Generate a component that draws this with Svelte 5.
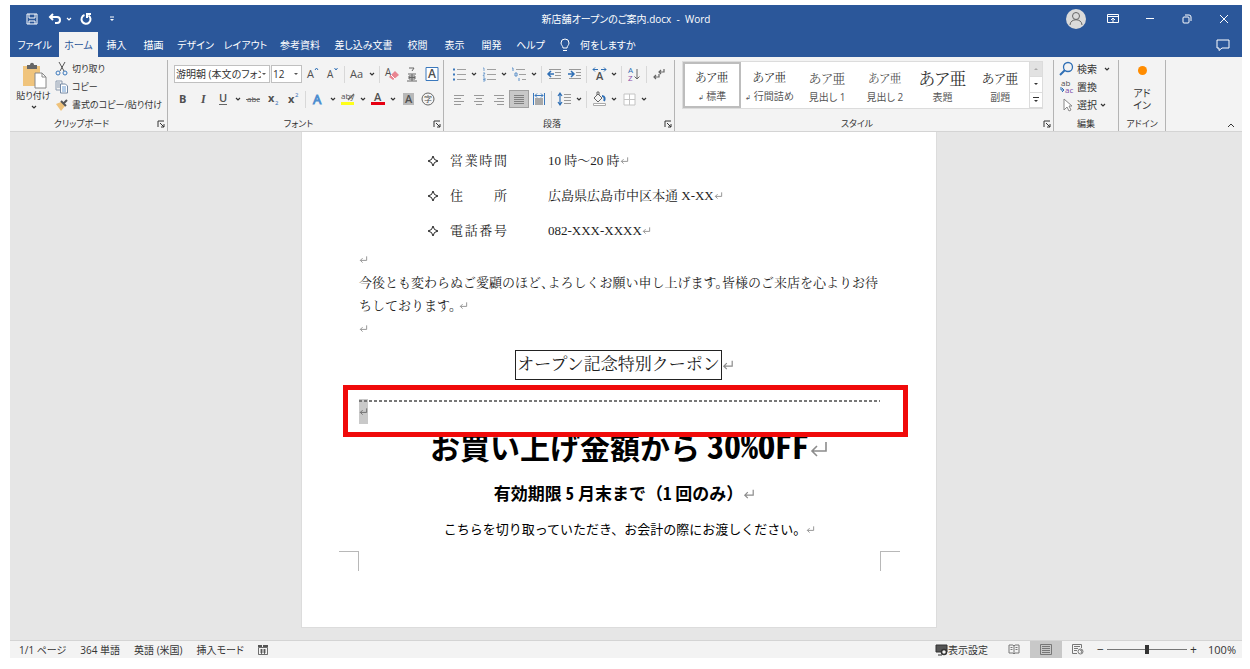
<script lang="ts">
	const tabs = [
		'ファイル', 'ホーム', '挿入', '描画', 'デザイン', 'レイアウト',
		'参考資料', '差し込み文書', '校閲', '表示', '開発', 'ヘルプ'
	];

	let activeTab = $state('ホーム');
	let activeStyle = $state('標準');
	let zoom = $state(100);

	const styles = [
		{ name: '標準', kind: 'body', mark: true },
		{ name: '行間詰め', kind: 'body', mark: true },
		{ name: '見出し 1', kind: 'heading', mark: false },
		{ name: '見出し 2', kind: 'heading small', mark: false },
		{ name: '表題', kind: 'title', mark: false },
		{ name: '副題', kind: 'subtitle', mark: false }
	];

	const details = [
		{ label: '営業時間', value: '10 時～20 時' },
		{ label: '住所', value: '広島県広島市中区本通 X-XX' },
		{ label: '電話番号', value: '082-XXX-XXXX' }
	];

	// '|' is a divider, 'v' a small drop-down arrow
	const fontTop = ['grow', 'shrink', '|', 'case', 'v', '|', 'clear', 'ruby', 'enclose'];
	const fontBottom = ['bold', 'italic', 'underline', 'v', 'strike', 'sub', 'sup', '|', 'effects', 'v', 'highlight', 'v', 'color', 'v', 'shade', 'circle'];
	const paraTop = ['bullets', 'v', 'numbers', 'v', 'levels', 'v', '|', 'outdent', 'indent', '|', 'asian', 'v', '|', 'sort', '|', 'marks'];
	const paraBottom = ['left', 'center', 'right', 'justify', 'distribute', '|', 'spacing', 'v', '|', 'fill', 'v', 'borders', 'v'];

	// all drawn on a 16 x 16 grid
	const icons: Record<string, string> = {
		grow: '<text x="3" y="12" font-size="11">A</text><path d="M11 4l1.500-2L14 4" stroke="#2f6fb5"/>',
		shrink: '<text x="3" y="12" font-size="10">A</text><path d="M10.500 2l1.500 2 1.500-2" stroke="#2f6fb5"/>',
		case: '<text x="1" y="12" font-size="11">Aa</text>',
		clear: '<text x="1" y="10" font-size="10">A</text><path d="M5 11l6-6 4 4-6 5z" fill="#e98591" stroke="none"/><path d="M7 9l4 4" stroke="#fff"/>',
		ruby: '<path d="M5 2h5l-2 3M4 8h8M5 10h6v3H5zM8 8v7M3 15h10M5 11.500h6"/>',
		enclose: '<path d="M2 1.500h12v13H2z" stroke="#3b79bd" fill="#fff"/><text x="4" y="12" font-size="12" font-weight="600">A</text>',
		bold: '<text x="4" y="12" font-size="11" font-weight="700">B</text>',
		italic: '<text x="6" y="12" font-size="12" font-style="italic" font-weight="600" font-family="Liberation Serif">I</text>',
		underline: '<text x="4" y="11" font-size="11" font-weight="600">U</text><path d="M4 13.500h8"/>',
		strike: '<text x="2" y="11" font-size="8">abc</text><path d="M1 8.500h14"/>',
		sub: '<text x="3" y="11" font-size="11" font-weight="700">x</text><text x="10" y="14" font-size="6" style="fill:#2f6fb5">2</text>',
		sup: '<text x="3" y="12" font-size="11" font-weight="700">x</text><text x="10" y="6" font-size="6" style="fill:#2f6fb5">2</text>',
		effects: '<text x="3" y="13" font-size="13" style="fill:#fff;stroke:#4f8fd0;stroke-width:1">A</text>',
		highlight: '<text x="1" y="8" font-size="8">aby</text><path d="M14 3L8 9" stroke-width="1.500"/><path d="M1 11h13v3H1z" fill="#ffff1a" stroke="none"/>',
		color: '<text x="4" y="10" font-size="11" font-weight="600">A</text><path d="M1 11h14v3H1z" fill="#e60012" stroke="none"/>',
		shade: '<path d="M3 2h11v12H3z" fill="#b8b8b8" stroke="none"/><text x="5" y="12" font-size="11" font-weight="600">A</text>',
		circle: '<circle cx="8" cy="8" r="6"/><text x="4" y="11" font-size="8" font-family="Noto Sans CJK JP">字</text>',
		bullets: '<path d="M6 3.500h9M6 8.500h9M6 13.500h9" stroke="#a0a0a0"/><path d="M2 2.500h2v2H2zM2 7.500h2v2H2zM2 12.500h2v2H2z" fill="#3b79bd" stroke="none"/>',
		numbers: '<path d="M6 3.500h9M6 8.500h9M6 13.500h9" stroke="#a0a0a0"/><path d="M2 2h1v3M2 7h2l-2 3h2M2 12h2v3H2M2 13.500h2" stroke="#5b8fc8" stroke-width=".8"/>',
		levels: '<path d="M5 3.500h9M8 8.500h7M11 13.500h4" stroke="#a0a0a0"/><path d="M1 2h1v3M4 7h2v3H4zM8 12v3" stroke="#5b8fc8"/>',
		outdent: '<path d="M3 3.500h12M9 6.500h6M9 9.500h6M3 12.500h12" stroke="#999"/><path d="M8 8H2M5 5L2 8l3 3" stroke="#2f6fb5" stroke-width="1.500"/>',
		indent: '<path d="M3 3.500h12M10 6.500h5M10 9.500h5M3 12.500h12" stroke="#999"/><path d="M2 8h6M5 5l3 3-3 3" stroke="#2f6fb5" stroke-width="1.500"/>',
		asian: '<text x="5" y="14" font-size="11" font-weight="600">A</text><path d="M7 3.500H2M4 1.500l-2 2 2 2M10 3.500h5M13 1.500l2 2-2 2" stroke="#2f6fb5"/>',
		sort: '<text x="2" y="7" font-size="8" style="fill:#2f6fb5">A</text><text x="2" y="15" font-size="8" style="fill:#8b4ba8">Z</text><path d="M11 3v10M8.500 10.500L11 13l2.500-2.500"/>',
		marks: '<path d="M13 3v3H8M10 4L8 6l2 2M8 8v3H3M5 9l-2 2 2 2" stroke-width="1.200"/>',
		left: '<path d="M3 4.500h10M3 7.500h7M3 10.500h10M3 13.500h7" stroke="#999"/>',
		center: '<path d="M3 4.500h10M5 7.500h6M3 10.500h10M5 13.500h6" stroke="#999"/>',
		right: '<path d="M3 4.500h10M6 7.500h7M3 10.500h10M6 13.500h7" stroke="#999"/>',
		justify: '<path d="M3 4.500h10M3 6.500h10M3 8.500h10M3 10.500h10M3 12.500h10" stroke="#808080"/>',
		distribute: '<path d="M2.500 2v12M13.500 2v12M4 4.500h8M6 2.500l-2 2 2 2M10 2.500l2 2-2 2" stroke="#3b79bd"/><path d="M4 7h8v7H4z" fill="#a8a8a8" stroke="none"/>',
		spacing: '<path d="M8 3.500h7M8 6.500h7M8 9.500h7M8 12.500h7" stroke="#999"/><path d="M4 3v10M2 5l2-3 2 3M2 11l2 3 2-3" stroke="#2f6fb5" stroke-width="1.200"/>',
		fill: '<path d="M3 7l4-4 4 4-4 4zM6 4V1h2v3"/><path d="M11 5c3 0 3 3 2 5" stroke="#2f6fb5" stroke-width="2"/><path d="M2.500 12.500h12v2h-12z" stroke="#aaa" fill="#fff"/>',
		borders: '<path d="M3 3h11v11H3zM8.500 3v11M3 8.500h11" stroke="#c4c4c4" fill="#fff"/>',
		cut: '<path d="M5 1l5 9M11 1L6 10" stroke="#555"/><circle cx="4" cy="12" r="2" stroke="#3b79bd"/><circle cx="11" cy="12" r="2" stroke="#3b79bd"/>',
		copy: '<path d="M2 2h6v9H2zM3 4h3M3 6h3M3 8h3" stroke="#8b9bb0"/><path d="M6.500 5h5l2 2v7h-7z" fill="#fff" stroke="#7489a4"/><path d="M8 8h4M8 10h4M8 12h4" stroke="#6b9bd0"/>',
		brush: '<path d="M2 7l5-2 4 4-4 5z" fill="#efc27a" stroke="none"/><path d="M7 4l5 5M10 6l3-3" stroke="#555" stroke-width="2"/>',
		find: '<circle cx="9" cy="6" r="4.500" stroke="#2f6fb5" stroke-width="1.300"/><path d="M6 9l-5 5" stroke="#2f6fb5" stroke-width="2"/>',
		replace: '<text x="2" y="7" font-size="8">ab</text><text x="6" y="14" font-size="8" style="fill:#7b4ba8">ac</text><path d="M2 8v3h3M3 9l2 2-2 2" stroke="#2f6fb5"/>',
		select: '<path d="M5 2v11l3-3 2 4 2-1-2-4h3z" fill="#fff" stroke="#888"/>'
	};
</script>

{#snippet icon(name: string)}
	<svg class="icon" width="16" height="16" viewBox="0 0 16 16" aria-hidden="true">{@html icons[name]}</svg>
{/snippet}

{#snippet caret()}
	<svg class="chevron" width="8" height="8" viewBox="0 0 8 8" aria-hidden="true"><path d="M2 3l2 2 2-2" /></svg>
{/snippet}

{#snippet returnMark(size: number)}
	<svg class="return" width={size} height={size} viewBox="0 0 10 10" aria-hidden="true">
		<path d="M8.500 1.500v4.500H1.500M4 3.500L1.500 6L4 8.500" />
	</svg>
{/snippet}

{#snippet tools(items: string[])}
	{#each items as item}
		{#if item === '|'}
			<span class="divider"></span>
		{:else if item === 'v'}
			<button class="caret" aria-label="オプション">{@render caret()}</button>
		{:else}
			<button class="tool" class:pressed={item === 'justify'} aria-label={item}>{@render icon(item)}</button>
		{/if}
	{/each}
{/snippet}

{#snippet groupLabel(text: string, launcher: boolean)}
	<div class="group-label" class:with-launcher={launcher}>
		<span>{text}</span>
		{#if launcher}
			<button class="launcher" aria-label="{text}の設定">
				<svg width="8" height="8" viewBox="0 0 8 8"><path d="M1 7V1h6M3 3l4 4M7 4v3H4" /></svg>
			</button>
		{/if}
	</div>
{/snippet}

<div class="window">
	<header class="titlebar">
		<div class="quick">
			<button aria-label="保存">
				<svg width="12" height="12" viewBox="0 0 12 12"><path d="M1 1h10v10H1zM3 1v4h6V1M3 11V8h6v3" /></svg>
			</button>
			<button aria-label="元に戻す">
				<svg width="14" height="14" viewBox="0 0 14 14" stroke-width="2"><path d="M5 2L2 5l3 3M2 5h7c4 0 4 6 0 6H7" /></svg>
			</button>
			<button class="narrow" aria-label="履歴">{@render caret()}</button>
			<button aria-label="繰り返し">
				<svg width="14" height="14" viewBox="0 0 14 14" stroke-width="2"><path d="M5.500 3A4.500 4.500 0 1 0 9.500 3.500M12 2H8v4" /></svg>
			</button>
			<button class="customize" aria-label="カスタマイズ">
				<svg width="6" height="8" viewBox="0 0 6 8"><path d="M1 2h4" /><path d="M1 4h4L3 6z" fill="#fff" stroke="none" /></svg>
			</button>
		</div>
		<div class="doc-title">新店舗オープンのご案内.docx&nbsp; -&nbsp; Word</div>
		<div class="window-buttons">
			<button aria-label="アカウント">
				<svg width="20" height="20" viewBox="0 0 20 20"><circle cx="10" cy="10" r="10" fill="#dadada" stroke="none" /><circle cx="10" cy="7" r="3.500" stroke="#666" /><path d="M4 16c0-7 12-7 12 0" stroke="#666" /></svg>
			</button>
			<button aria-label="リボンの表示オプション">
				<svg width="12" height="12" viewBox="0 0 12 12"><path d="M.5 1.500h11v8H.5zM.5 3.500h11M6 9V5M4 7l2-2 2 2" /></svg>
			</button>
			<button aria-label="最小化">
				<svg width="10" height="10" viewBox="0 0 10 10"><path d="M1 4.500h8" /></svg>
			</button>
			<button aria-label="元に戻す (縮小)">
				<svg width="10" height="10" viewBox="0 0 10 10"><rect x="1" y="3" width="6" height="6" rx="1" /><path d="M3 1h4q2 0 2 2v4" /></svg>
			</button>
			<button aria-label="閉じる">
				<svg width="10" height="10" viewBox="0 0 10 10"><path d="M1 1l8 8M9 1L1 9" /></svg>
			</button>
		</div>
	</header>

	<nav class="tabs">
		{#each tabs as tab}
			<button class:active={tab === activeTab} onclick={() => (activeTab = tab)}>{tab}</button>
		{/each}
		<button class="tell-me">
			<svg width="12" height="14" viewBox="0 0 12 14"><path d="M4 10C4 8 2 7 2 5a4 4 0 0 1 8 0c0 2-2 3-2 5zM4 12.500h4" /></svg>
			何をしますか
		</button>
		<button class="comment" aria-label="コメント">
			<svg width="14" height="12" viewBox="0 0 14 12"><path d="M1 1h12v8H6l-3 2.500V9H1z" /></svg>
		</button>
	</nav>

	<div class="ribbon">
		<section class="group clipboard">
			<div class="group-body">
				<button class="paste">
					<svg width="26" height="27" viewBox="0 0 26 27">
						<path d="M2 4h17v20H2z" fill="#f0c47c" />
						<path d="M6 3h3c0-3 4-3 4 0h3v4H6z" fill="#666" />
						<path d="M14 11h7l4 4v11H14z" fill="#fff" stroke="#888" />
						<path d="M21 11v4h4" fill="none" stroke="#888" />
					</svg>
					<span>貼り付け</span>
					{@render caret()}
				</button>
				<div class="stack">
					<button>{@render icon('cut')}切り取り</button>
					<button>{@render icon('copy')}コピー</button>
					<button>{@render icon('brush')}書式のコピー/貼り付け</button>
				</div>
			</div>
			{@render groupLabel('クリップボード', true)}
		</section>

		<section class="group font">
			<div class="group-body rows">
				<div class="row">
					<div class="combo name">
						<select aria-label="フォント"><option>游明朝 (本文のフォント)</option></select>
						<svg width="6" height="4" viewBox="0 0 6 4"><path d="M1 1h4L3 3z" /></svg>
					</div>
					<div class="combo size">
						<select aria-label="フォント サイズ"><option>12</option></select>
						<svg width="6" height="4" viewBox="0 0 6 4"><path d="M1 1h4L3 3z" /></svg>
					</div>
					{@render tools(fontTop)}
				</div>
				<div class="row">{@render tools(fontBottom)}</div>
			</div>
			{@render groupLabel('フォント', true)}
		</section>

		<section class="group paragraph">
			<div class="group-body rows">
				<div class="row">{@render tools(paraTop)}</div>
				<div class="row">{@render tools(paraBottom)}</div>
			</div>
			{@render groupLabel('段落', true)}
		</section>

		<section class="group styles">
			<div class="group-body">
				<div class="gallery">
					{#each styles as style}
						<button class="style" class:selected={style.name === activeStyle} onclick={() => (activeStyle = style.name)}>
							<span class="sample {style.kind}">あア亜</span>
							<span class="style-name">{#if style.mark}<small>↲</small>{/if} {style.name}</span>
						</button>
					{/each}
					<div class="gallery-scroll">
						<button class="off" aria-label="前へ"><svg width="6" height="4" viewBox="0 0 6 4"><path d="M1 3h4L3 1z" /></svg></button>
						<button aria-label="次へ"><svg width="6" height="4" viewBox="0 0 6 4"><path d="M1 1h4L3 3z" /></svg></button>
						<button aria-label="その他"><svg width="8" height="8" viewBox="0 0 8 8"><path d="M1 1h6v1H1zM2 4h4L4 6z" /></svg></button>
					</div>
				</div>
			</div>
			{@render groupLabel('スタイル', true)}
		</section>

		<section class="group editing">
			<div class="group-body">
				<div class="stack">
					<button>{@render icon('find')}検索 <span class="spaced">{@render caret()}</span></button>
					<button>{@render icon('replace')}置換</button>
					<button>{@render icon('select')}選択{@render caret()}</button>
				</div>
			</div>
			{@render groupLabel('編集', false)}
		</section>

		<section class="group addins">
			<div class="group-body">
				<button class="addin"><span class="dot"></span><span>アド<br />イン</span></button>
			</div>
			{@render groupLabel('アドイン', false)}
		</section>

		<div class="ribbon-end">
			<button aria-label="リボンを折りたたむ">
				<svg width="10" height="8" viewBox="0 0 10 8"><path d="M2 6l3-3 3 3" /></svg>
			</button>
		</div>
	</div>

	<main class="workspace">
		<article class="page">
			<ul class="details">
				{#each details as item}
					<li>
						<svg width="12" height="12" viewBox="0 0 12 12"><path d="M6 1L7.500 4.500L11 6L7.500 7.500L6 11L4.500 7.500L1 6L4.500 4.500z" /></svg>
						<span class="label">{item.label}</span>
						<span>{item.value}{@render returnMark(9)}</span>
					</li>
				{/each}
			</ul>
			<p>{@render returnMark(9)}</p>
			<p>今後とも変わらぬご愛顧のほど、よろしくお願い申し上げます。皆様のご来店を心よりお待ちしております。 {@render returnMark(9)}</p>
			<p>{@render returnMark(9)}</p>
			<h2 class="coupon"><span>オープン記念特別クーポン</span>{@render returnMark(12)}</h2>
			<div class="cut-line">
				<span class="selection">{@render returnMark(9)}</span>
				<div class="callout"></div>
			</div>
			<h1>お買い上げ金額から <span class="half">30%OFF</span>{@render returnMark(20)}</h1>
			<h3>有効期限 <span class="half">5</span> 月末まで（<span class="half">1</span> 回のみ）{@render returnMark(12)}</h3>
			<p class="note">こちらを切り取っていただき、お会計の際にお渡しください。{@render returnMark(9)}</p>
			<div class="crop-marks"><i></i><i class="right"></i></div>
		</article>
	</main>

	<footer class="status">
		<span>1/1 ページ</span>
		<span>364 単語</span>
		<span>英語 (米国)</span>
		<span>挿入モード</span>
		<svg width="10" height="10" viewBox="0 0 10 10" stroke-width=".7"><path d="M.5 2.500h9v7h-9zM2 5h6M2 7h6M3.500 4v5M6.500 4v5" /><path d="M0 0h4v2H0zM5 0h5v2H5z" fill="#555" stroke="none" /></svg>
		<div class="view-controls">
			<button class="display">
				<svg width="13" height="12" viewBox="0 0 13 12"><path d="M1 1h11v7H1zM3 11h4" fill="#555" /><circle cx="9" cy="8" r="2.500" fill="#f3f3f3" stroke-width="1.500" /></svg>表示設定
			</button>
			<button class="view" aria-label="閲覧モード">
				<svg width="12" height="11" viewBox="0 0 12 11"><path d="M1 1h4l1 1 1-1h4v8H7l-1 1-1-1H1zM6 2v8M2.500 3.500h2M2.500 5.500h2M7.500 3.500h2M7.500 5.500h2" /></svg>
			</button>
			<button class="view on" aria-label="印刷レイアウト">
				<svg width="12" height="11" viewBox="0 0 12 11"><path d="M.5.5h11v10H.5zM2 2.500h8M2 4.500h8M2 6.500h8M2 8.500h8" /></svg>
			</button>
			<button class="view" aria-label="Web レイアウト">
				<svg width="12" height="11" viewBox="0 0 12 11"><path d="M5 9.500H.5v-9h9V4M2 2.500h6M2 4.500h4M2 6.500h3" /><circle cx="8.500" cy="7.500" r="2.500" /><path d="M8 6l2 1-1 2" /></svg>
			</button>
			<button class="step" aria-label="縮小">−</button>
			<input type="range" min="10" max="190" bind:value={zoom} aria-label="ズーム" />
			<button class="step" aria-label="拡大">+</button>
			<output>{zoom}%</output>
		</div>
	</footer>
</div>

<style>
	:global(body) {
		margin: 0;
		background: #fff;
	}

	.window {
		margin: 5px 8px 10px 10px;
		font-family: 'Open Sans', 'Noto Sans CJK JP', sans-serif;
		font-feature-settings: 'palt';
		font-size: 10px;
		line-height: 14px;
		color: #333;
		background: #f3f3f3;
	}

	button {
		display: flex;
		align-items: center;
		justify-content: center;
		padding: 0;
		border: 0;
		background: none;
		color: inherit;
		font: inherit;
		font-feature-settings: inherit;
		white-space: nowrap;
	}

	svg {
		flex-shrink: 0;
		fill: none;
		stroke: currentColor;
	}

	.icon {
		overflow: visible;
		color: #666;
	}

	.icon :global(text) {
		fill: #505050;
		stroke: none;
	}

	.chevron {
		stroke-width: 1.2;
	}

	.titlebar {
		display: grid;
		grid-template-columns: 1fr auto 1fr;
		align-items: center;
		height: 27px;
		background: #2b579a;
		color: #fff;
	}

	.quick {
		display: flex;
		padding-left: 13px;
	}

	.quick button {
		width: 18px;
	}

	.quick button:nth-child(2) {
		margin-left: 5px;
	}

	.quick .narrow {
		width: 10px;
	}

	.quick .customize {
		margin-left: 8px;
	}

	.quick button:nth-child(4) {
		margin-left: 3px;
	}

	.window-buttons {
		display: flex;
		justify-content: flex-end;
	}

	.window-buttons button {
		width: 37px;
	}

	.tabs {
		display: grid;
		grid-template-columns: 49px 39px 37px 37px 47px 53px 56px 71px 37px 37px 37px 41px auto 1fr;
		height: 25px;
		background: #2b579a;
		color: #fff;
	}

	.tabs .active {
		background: #f3f3f3;
		color: #2b579a;
	}

	.tell-me {
		gap: 9px;
		padding-left: 8px;
	}

	.tabs .comment {
		justify-content: flex-end;
		padding-right: 12px;
	}

	.ribbon {
		display: flex;
		height: 74px;
		border-bottom: 1px solid #d4d4d4;
	}

	.group {
		display: flex;
		flex-direction: column;
		box-sizing: border-box;
		margin: 3px 0 0;
		border-right: 1px solid #b4b4b4;
	}

	.group-body {
		display: flex;
		flex: 1;
	}

	.group-label {
		position: relative;
		display: flex;
		justify-content: center;
		height: 14px;
		font-size: 9px;
	}

	.with-launcher {
		padding-right: 14px;
	}

	.launcher {
		position: absolute;
		right: 2px;
		top: 3px;
	}

	.clipboard {
		width: 158px;
		font-size: 9px;
	}

	.font {
		width: 276px;
	}

	.paragraph {
		width: 231px;
	}

	.styles {
		flex: 1;
	}

	.editing {
		width: 65px;
	}

	.addins {
		width: 47px;
	}

	.paste {
		flex-direction: column;
		justify-content: flex-start;
		width: 44px;
		padding: 2px 0 0 3px;
	}

	.paste svg:first-child {
		stroke: none;
	}

	.stack {
		display: flex;
		flex-direction: column;
	}

	.stack button {
		justify-content: flex-start;
		gap: 2px;
		height: 18px;
	}

	.editing .stack {
		padding-left: 5px;
	}

	.spaced {
		display: flex;
		padding-left: 4px;
	}

	.rows {
		flex-direction: column;
		gap: 5px;
		padding: 4px 0 0 5px;
	}

	.row {
		display: flex;
		align-items: center;
		height: 20px;
	}

	.tool {
		width: 20px;
		height: 18px;
	}

	.tool.pressed {
		background: #c8c8c8;
		box-shadow: inset 0 0 0 1px #a0a0a0;
	}

	.caret {
		width: 10px;
		height: 18px;
	}

	.divider {
		width: 1px;
		height: 17px;
		margin: 0 2px;
		background: #d8d8d8;
	}

	.combo {
		position: relative;
		box-sizing: border-box;
		height: 18px;
		margin-left: 1px;
		border: 1px solid #c0c0c0;
		background: #fff;
	}

	.combo.name {
		width: 96px;
	}

	.combo.size {
		width: 31px;
	}

	.combo select {
		width: 100%;
		height: 16px;
		padding: 0 8px 0 1px;
		border: 0;
		appearance: none;
		background: none;
		color: #333;
		font: inherit;
		font-feature-settings: inherit;
	}

	.combo svg {
		position: absolute;
		right: 2px;
		top: 6px;
		fill: #555;
		stroke: none;
		pointer-events: none;
	}

	.gallery {
		display: flex;
		flex: 1;
		height: 46px;
		margin: 2px 11px 0 8px;
		background: #fff;
		box-shadow: 0 0 0 1px #dcdcdc;
	}

	.style {
		flex: 1;
		flex-direction: column;
		padding-top: 4px;
		color: #555;
	}

	.style.selected {
		box-shadow: inset 0 0 0 2px #bdbdbd;
	}

	.sample {
		height: 20px;
		color: #333;
		font-family: 'Noto Serif CJK JP', 'Noto Sans CJK JP', serif;
		font-size: 12px;
		line-height: 20px;
	}

	.sample.heading {
		color: #555;
		font-size: 13px;
	}

	.sample.small {
		font-size: 12px;
	}

	.sample.title {
		font-size: 17px;
	}

	.sample.subtitle {
		font-size: 13px;
	}

	.style-name {
		line-height: 18px;
	}

	.style-name small {
		font-size: 7px;
	}

	.gallery-scroll {
		display: flex;
		flex-direction: column;
		width: 12px;
		border-left: 1px solid #dcdcdc;
	}

	.gallery-scroll button {
		flex: 1;
		border-bottom: 1px solid #dcdcdc;
	}

	.gallery-scroll .off {
		background: #e2e2e2;
		color: #aaa;
	}

	.gallery-scroll svg {
		fill: currentColor;
		stroke: none;
	}

	.addin {
		flex: 1;
		flex-direction: column;
		gap: 12px;
		line-height: 12px;
	}

	.dot {
		width: 9px;
		height: 9px;
		border-radius: 50%;
		background: #ff8c00;
	}

	.ribbon-end {
		display: flex;
		align-items: flex-end;
		justify-content: flex-end;
		width: 76px;
	}

	.ribbon-end button {
		margin: 0 6px 2px;
	}

	.workspace {
		padding: 0 14px 12px 0;
		background: #e6e6e6;
	}

	.page {
		box-sizing: border-box;
		width: 636px;
		margin: 0 auto;
		padding: 11px 56px 56px 57px;
		border: 1px solid #dcdcdc;
		border-top: 0;
		background: #fff;
		color: #222;
		font-family: 'Liberation Serif', 'Noto Serif CJK JP', 'Noto Sans CJK JP', serif;
		font-feature-settings: 'halt';
		font-size: 13px;
		line-height: 23px;
	}

	.return {
		color: #8c8c8c;
	}

	.details {
		margin: 0;
		padding: 0 0 0 68px;
		list-style: none;
	}

	.details li {
		display: grid;
		grid-template-columns: 23px 57px 1fr;
		align-items: center;
		height: 35px;
	}

	.details li > span:last-child {
		padding-left: 41px;
	}

	.label {
		text-align: justify;
		text-align-last: justify;
	}

	.page p {
		margin: 0;
	}

	.coupon {
		display: flex;
		align-items: center;
		justify-content: center;
		margin: 10px 0 19px;
		padding-left: 10px;
		font-size: 17px;
		font-weight: 400;
	}

	.coupon span {
		padding: 0 1px;
		border: 1px solid #222;
		line-height: 28px;
	}

	/* dashed line the reader cuts along */
	.cut-line {
		position: relative;
		height: 25px;
		background: repeating-linear-gradient(to right, #777 0 3px, transparent 3px 5px) 0 1px / 100% 2px no-repeat;
	}

	.selection {
		display: flex;
		align-items: center;
		width: 9px;
		height: 25px;
		background: rgba(120, 120, 120, 0.4);
	}

	.selection .return {
		color: #666;
	}

	.callout {
		position: absolute;
		inset: -14px -28px -13px -16px;
		border: 5px solid #f00a0a;
	}

	h1,
	h3,
	.page .note {
		margin: 0;
		color: #000;
		font-family: 'Noto Sans CJK JP', sans-serif;
		font-feature-settings: normal;
		text-align: center;
		white-space: nowrap;
	}

	h1 {
		height: 50px;
		padding-left: 20px;
		font-size: 30px;
		line-height: 42px;
	}

	h1 .half {
		font-size: 34px;
	}

	h1 .return {
		stroke-width: 0.8;
	}

	.page .half {
		font-feature-settings: 'hwid';
	}

	h3 {
		height: 42px;
		padding-left: 10px;
		font-size: 17px;
		line-height: 38px;
	}

	.page .note {
		padding-left: 20px;
		line-height: 26px;
	}

	.crop-marks {
		display: flex;
		justify-content: space-between;
		margin: 9px -20px 0;
	}

	.crop-marks i {
		width: 19px;
		height: 19px;
		border-top: 1px solid #b8b8b8;
		border-right: 1px solid #b8b8b8;
	}

	.crop-marks .right {
		border-right: 0;
		border-left: 1px solid #b8b8b8;
	}

	.status {
		display: flex;
		align-items: center;
		gap: 14px;
		height: 17px;
		padding-left: 9px;
		border-top: 1px solid #d4d4d4;
	}

	.view-controls {
		display: flex;
		align-items: center;
		margin-left: auto;
		padding-right: 6px;
	}

	.display {
		margin-right: 10px;
	}

	.view {
		width: 32px;
		height: 17px;
		color: #777;
	}

	.view.on {
		background: #c8c8c8;
	}

	.step {
		width: 13px;
		font-size: 12px;
	}

	input[type='range'] {
		width: 80px;
		height: 12px;
		margin: 0;
		appearance: none;
		background: linear-gradient(#777, #777) center / 100% 1px no-repeat;
	}

	input[type='range']::-webkit-slider-thumb {
		appearance: none;
		width: 4px;
		height: 9px;
		background: #333;
	}

	output {
		width: 36px;
		text-align: right;
		font-size: 11px;
	}
</style>
